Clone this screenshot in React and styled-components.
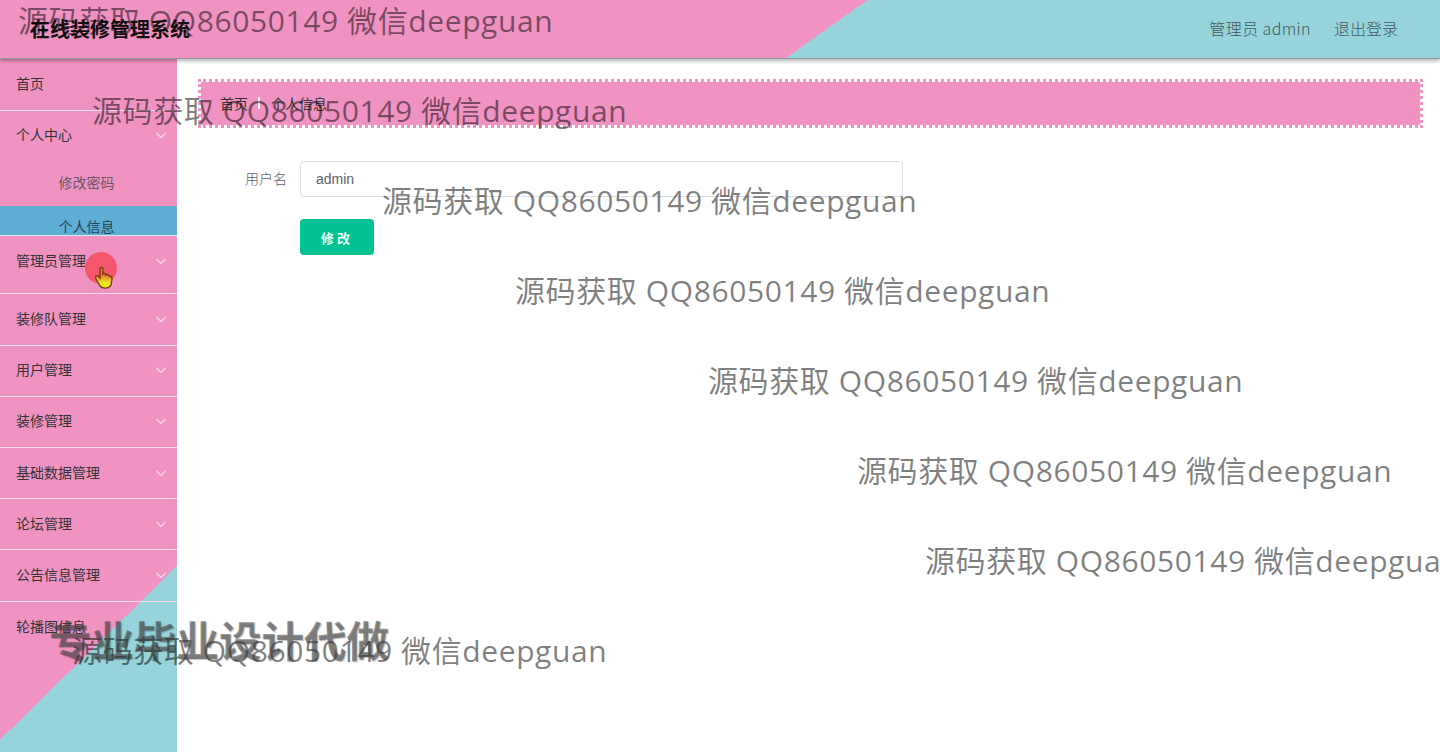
import styled, { createGlobalStyle } from 'styled-components'

const PINK = '#f093c3'
const TEAL = '#96d3da'

const GlobalStyle = createGlobalStyle`
  html, body {
    margin: 0;
    padding: 0;
    background: #fff;
    overflow: hidden;
  }

  body {
    font-family: "Noto Sans CJK SC", "Liberation Sans", sans-serif;
  }
`

const Page = styled.div`
  position: relative;
  width: 1440px;
  height: 752px;
  overflow: hidden;
  display: flex;
  flex-direction: column;
`

const Header = styled.header`
  position: relative;
  z-index: 1;
  flex: none;
  box-sizing: content-box;
  height: 56px;
  padding: 0 42px 2px 30px;
  display: flex;
  align-items: center;
  justify-content: space-between;
  background: linear-gradient(144.6deg, ${PINK} 502.6px, ${TEAL} 502.6px);
  border-bottom: 1px solid #8c9a9e;
  box-shadow: 0 2px 4px rgba(0, 0, 0, 0.3);
`

const Title = styled.div`
  font-size: 20px;
  font-weight: 700;
  color: #111;
`

const UserBox = styled.div`
  display: flex;
  gap: 23px;
  font-size: 16px;
  font-weight: 300;
  color: #44585e;
`

const UserName = styled.span`
  letter-spacing: 0.4px;
`

const Body = styled.div`
  flex: 1;
  display: flex;
  min-height: 0;
`

const Sidebar = styled.nav`
  flex: none;
  width: 177px;
  background: linear-gradient(135.5deg, ${PINK} 485.6px, ${TEAL} 485.6px);
`

const MenuRow = styled.div`
  box-sizing: border-box;
  height: ${(props) => props.$height}px;
  padding: ${(props) => props.$top}px 10px 0 16px;
  display: flex;
  justify-content: space-between;
  align-items: flex-start;
  font-size: 14px;
  line-height: 20px;
  color: #333;
  border-bottom: ${(props) => (props.$plain ? 'none' : '1px solid #f8dcec')};
`

const SubRow = styled.div`
  box-sizing: border-box;
  height: ${(props) => props.$height}px;
  padding: ${(props) => props.$top}px 4px 0 0;
  overflow: hidden;
  text-align: center;
  font-size: 14px;
  line-height: 20px;
  color: ${(props) => (props.$active ? '#26404f' : '#6b5566')};
  background: ${(props) => (props.$active ? '#5eadd5' : 'transparent')};
  border-bottom: ${(props) => (props.$active ? '1px solid #d8e8f4' : 'none')};
`

const Chevron = styled.svg`
  width: 12px;
  height: 12px;
  margin-top: 5px;
  fill: none;
  stroke: #f8dcec;
  stroke-width: 1.2;
`

const Main = styled.main`
  flex: 1;
  padding: 20px 17px 0 21px;
`

const Breadcrumb = styled.div`
  box-sizing: border-box;
  height: 49px;
  padding: 0 19px 2px;
  display: flex;
  align-items: center;
  gap: 10px;
  font-size: 14px;
  color: #333;
  background: ${PINK};
  background-clip: padding-box;
  border: 3px dotted ${PINK};
`

const CrumbDivider = styled.span`
  width: 2px;
  height: 12px;
  margin-right: 1px;
  background: #fff;
`

const Form = styled.form`
  padding: 33px 0 0 37px;
  display: flex;
  flex-direction: column;
  gap: 22px;
  align-items: flex-start;
`

const Field = styled.div`
  display: flex;
  align-items: center;
  gap: 12px;
`

const FieldLabel = styled.label`
  width: 53px;
  padding: 0 1px 3px 0;
  box-sizing: border-box;
  text-align: right;
  white-space: nowrap;
  font-size: 14px;
  font-weight: 300;
  color: #606266;
`

const Input = styled.input`
  box-sizing: border-box;
  width: 603px;
  height: 36px;
  padding: 0 15px;
  border: 1px solid #dcdfe6;
  border-radius: 4px;
  font-family: "Liberation Sans", sans-serif;
  font-size: 14px;
  color: #606266;
  background: #fff;
`

const SubmitButton = styled.button`
  margin-left: 65px;
  width: 74px;
  height: 36px;
  border: none;
  border-radius: 4px;
  font-family: inherit;
  font-size: 13px;
  font-weight: 700;
  letter-spacing: 3px;
  color: #e8fff8;
  background: #00c292;
`

const Marks = styled.div`
  position: absolute;
  top: -24px;
  left: 0;
  width: 1440px;
  z-index: 2;
  display: flex;
  flex-direction: column;
  pointer-events: none;
`

const Mark = styled.div`
  height: 90px;
  line-height: 90px;
  padding-left: ${(props) => props.$left}px;
  white-space: nowrap;
  font-family: "Open Sans", "Noto Sans CJK SC", sans-serif;
  font-size: 30px;
  letter-spacing: 0.6px;
  color: rgba(0, 0, 0, 0.5);
`

const Promo = styled.div`
  position: absolute;
  left: 49px;
  top: 613px;
  z-index: 3;
  font-size: 42.5px;
  line-height: 52px;
  font-weight: 700;
  white-space: nowrap;
  color: rgba(70, 70, 70, 0.58);
  text-shadow: 1px 1px 1px rgba(0, 0, 0, 0.25);
  pointer-events: none;
`

const Pointer = styled.svg`
  position: absolute;
  left: 85px;
  top: 252px;
  z-index: 3;
  width: 34px;
  height: 42px;
  pointer-events: none;
`

const menus = [
  { name: '首页', height: 52, top: 14 },
  { name: '个人中心', height: 50, top: 13, arrow: true, plain: true },
]

const menusAfter = [
  { name: '管理员管理', height: 58, top: 14, arrow: true },
  { name: '装修队管理', height: 52, top: 14, arrow: true },
  { name: '用户管理', height: 51, top: 13, arrow: true },
  { name: '装修管理', height: 51, top: 13, arrow: true },
  { name: '基础数据管理', height: 51, top: 14, arrow: true },
  { name: '论坛管理', height: 51, top: 14, arrow: true },
  { name: '公告信息管理', height: 52, top: 14, arrow: true },
  { name: '轮播图信息', height: 100, top: 14, plain: true },
]

const marks = [18, 92, 382, 515, 708, 857, 925, 72]

function MenuItem({ item }) {
  return (
    <MenuRow $height={item.height} $top={item.top} $plain={item.plain}>
      {item.name}
      {item.arrow && (
        <Chevron viewBox='0 0 12 12'>
          <path d='M1.5 4 L6 8.5 L10.5 4' />
        </Chevron>
      )}
    </MenuRow>
  )
}

function App() {
  return (
    <Page>
      <GlobalStyle />
      <Header>
        <Title>在线装修管理系统</Title>
        <UserBox>
          <UserName>管理员 admin</UserName>
          <span>退出登录</span>
        </UserBox>
      </Header>

      <Body>
        <Sidebar>
          {menus.map((item) => (
            <MenuItem key={item.name} item={item} />
          ))}
          <SubRow $height={45} $top={11}>修改密码</SubRow>
          <SubRow $height={30} $top={10} $active>个人信息</SubRow>
          {menusAfter.map((item) => (
            <MenuItem key={item.name} item={item} />
          ))}
        </Sidebar>

        <Main>
          <Breadcrumb>
            <span>首页</span>
            <CrumbDivider />
            <span>个人信息</span>
          </Breadcrumb>
          <Form>
            <Field>
              <FieldLabel>用户名</FieldLabel>
              <Input defaultValue='admin' />
            </Field>
            <SubmitButton type='button'>修改</SubmitButton>
          </Form>
        </Main>
      </Body>

      <Marks>
        {marks.map((left) => (
          <Mark key={left} $left={left}>源码获取 QQ86050149 微信deepguan</Mark>
        ))}
      </Marks>
      <Promo>专业毕业设计代做</Promo>

      <Pointer viewBox='0 0 34 42'>
        <defs>
          <linearGradient id='handFill' x1='0' y1='0' x2='0' y2='1'>
            <stop offset='0.35' stopColor='#f0703a' />
            <stop offset='0.75' stopColor='#e8e820' />
          </linearGradient>
        </defs>
        <circle cx='16' cy='16' r='16' fill='#f4566c' />
        <path
          d='M15 17 L15 26 L13 24 C11 23 10 25 11 27 L15 34 C17 37 24 37 26 33 L27 27 C27 24 25 24 24 24 C23 22 22 22 21 23 C20 21 19 21 18 22 L18 17 C18 15 15 15 15 17 Z'
          fill='url(#handFill)'
          stroke='#7a3a10'
          strokeWidth='1.4'
        />
      </Pointer>
    </Page>
  )
}

export default App
